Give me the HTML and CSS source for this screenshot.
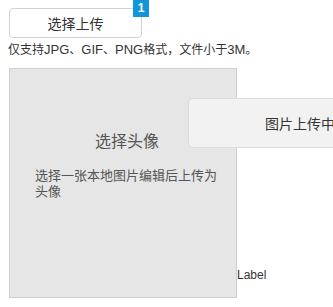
FILE: index.html
```html
<!DOCTYPE html>
<html lang="zh">
<head>
<meta charset="utf-8">
<link rel="stylesheet" href="styles.css">
</head>
<body>
<div class="page">
  <div class="upload-row">
    <button class="upload-btn">选择上传<span class="badge">1</span></button>
  </div>
  <p class="hint">仅支持<span class="lat">JPG</span>、<span class="lat">GIF</span>、<span class="lat">PNG</span>格式，文件小于<span class="lat">3M</span>。</p>
  <div class="avatar-row">
    <div class="avatar-box">
      <div class="avatar-inner">
        <div class="avatar-title">选择头像</div>
        <div class="avatar-desc">选择一张本地图片编辑后上传为头像</div>
      </div>
    </div>
    <span class="label">Label</span>
  </div>
  <div class="uploading">图片上传中请稍候...</div>
</div>
</body>
</html>
```
FILE: styles.css
```css
html, body {
  margin: 0;
  padding: 0;
  background: #fff;
}
.page {
  position: relative;
  width: 333px;
  height: 307px;
  overflow: hidden;
  padding: 8px 0 0 9px;
  box-sizing: border-box;
  font-family: "Liberation Sans", "Noto Sans CJK SC", sans-serif;
  color: #333;
}
.upload-row {
  display: flex;
}
.upload-btn {
  position: relative;
  width: 133px;
  height: 30px;
  box-sizing: border-box;
  border: 1px solid #d2d2d2;
  border-radius: 4px;
  background: #fff;
  font-family: "Noto Sans CJK SC", sans-serif;
  font-size: 14px;
  color: #333;
  padding: 0;
  line-height: 28px;
}
.badge {
  position: absolute;
  top: -9px;
  right: -8px;
  width: 16px;
  height: 17px;
  background: #1296db;
  color: #fff;
  font-family: "Liberation Sans", sans-serif;
  font-weight: bold;
  font-size: 12px;
  line-height: 17px;
  text-align: center;
}
.hint {
  margin: 3px 0 0 -1px;
  font-size: 12px;
  line-height: 18px;
  color: #333;
}
.lat {
  font-size: 13px;
}
.avatar-row {
  display: flex;
  align-items: flex-end;
  margin-top: 9px;
}
.avatar-box {
  width: 228px;
  height: 230px;
  box-sizing: border-box;
  border: 1px solid #cfcfcf;
  background: #e6e6e6;
}
.avatar-inner {
  margin: 61px 0 0 25px;
  width: 184px;
}
.avatar-title {
  text-align: center;
  font-family: "Noto Sans CJK SC", sans-serif;
  font-size: 16px;
  line-height: 20px;
  color: #555;
}
.avatar-desc {
  margin-top: 17px;
  font-family: "Noto Sans CJK SC", sans-serif;
  font-size: 13px;
  line-height: 16px;
  color: #555;
}
.label {
  font-size: 12px;
  line-height: 14px;
  margin-bottom: 16px;
  color: #333;
}
.uploading {
  position: absolute;
  left: 188px;
  top: 98px;
  width: 280px;
  height: 50px;
  box-sizing: border-box;
  padding-left: 76px;
  border: 1px solid #dcdcdc;
  border-radius: 5px;
  background: #f2f2f2;
  font-family: "Noto Sans CJK SC", sans-serif;
  font-size: 14px;
  line-height: 48px;
  white-space: nowrap;
  color: #333;
}
```
